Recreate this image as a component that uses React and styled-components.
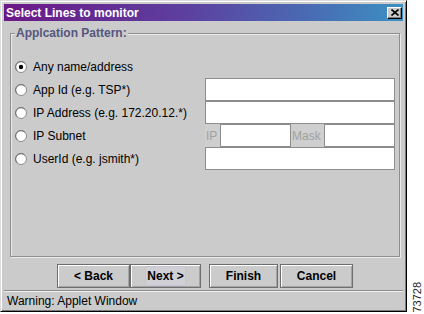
import React from 'react';
import styled, { createGlobalStyle } from 'styled-components';

const GlobalStyle = createGlobalStyle`
  html, body {
    margin: 0;
    background: #fff;
    font-family: "Liberation Sans", Arial, sans-serif;
    font-size: 12px;
  }
`;

const Page = styled.div`
  display: flex;
  align-items: flex-start;
  width: 424px;
  height: 314px;
  overflow: hidden;
`;

const Window = styled.div`
  width: 407px;
  height: 312px;
  box-sizing: border-box;
  display: flex;
  flex-direction: column;
  background: #cbcbcb;
  border: 1px solid;
  border-color: #dcdcdc #000 #000 #dcdcdc;
  box-shadow: inset 1px 1px 0 #fff, inset -1px -1px 0 #7c7c7c;
  padding: 3px 3px 1px 3px;
`;

const TitleBar = styled.div`
  height: 17px;
  flex-shrink: 0;
  display: flex;
  align-items: center;
  padding: 0 1px 0 2px;
  background: linear-gradient(to right, #6c1887 0%, #5d3f9f 45%, #4a69b3 75%, #3c90c2 100%);
  color: #fff;
  font-weight: bold;
  font-size: 12px;
`;

const Title = styled.span`
  flex: 1;
`;

const CloseButton = styled.div`
  width: 15px;
  height: 12px;
  box-sizing: border-box;
  display: flex;
  align-items: center;
  justify-content: center;
  background: #cbcbcb;
  border: 1px solid;
  border-color: #fff #000 #000 #fff;
  box-shadow: inset -1px -1px 0 #808080;
`;

const Group = styled.div`
  height: 224px;
  box-sizing: border-box;
  margin: 12px 3px 0 6px;
  display: flex;
  flex-direction: column;
  border: 1px solid #8e8e8e;
  box-shadow: 1px 1px 0 #ebebeb, inset 1px 1px 0 #ebebeb;
`;

const Legend = styled.span`
  align-self: flex-start;
  margin: -8px 0 0 4px;
  padding: 0 1px;
  line-height: 14px;
  background: #cbcbcb;
  color: #56567e;
  font-weight: bold;
`;

const Rows = styled.div`
  margin-top: 15px;
  padding-left: 4px;
  display: flex;
  flex-direction: column;
`;

const Row = styled.div`
  height: 23px;
  display: grid;
  grid-template-columns: 190px 190px;
  align-items: center;
`;

const Choice = styled.label`
  display: flex;
  align-items: center;
  gap: 6px;
  color: #000;
`;

const Field = styled.div`
  height: 23px;
  box-sizing: border-box;
  flex: ${(p) => p.$flex || 'none'};
  width: ${(p) => (p.$w ? `${p.$w}px` : 'auto')};
  background: #fff;
  border: 1px solid #8c8c8c;
`;

const Split = styled.div`
  display: flex;
  height: 23px;
`;

const Tag = styled.span`
  width: ${(p) => p.$w}px;
  box-sizing: border-box;
  display: flex;
  align-items: center;
  padding-left: 1px;
  background: #cfcfcf;
  color: #a0a0a0;
`;

const ButtonRow = styled.div`
  display: flex;
  margin-top: 7px;
  padding-left: 53px;
  flex-shrink: 0;
`;

const Button = styled.div`
  width: ${(p) => p.$w}px;
  margin-left: ${(p) => p.$ml || 0}px;
  height: 24px;
  box-sizing: border-box;
  display: flex;
  align-items: center;
  justify-content: center;
  border: 1px solid #6e6e6e;
  box-shadow: inset 1px 1px 0 #fff, inset -1px -1px 0 #a4a4a4;
  font-weight: bold;
  color: #000;
`;

const Focus = styled.span`
  padding: 2px 1px;
  border: 1px solid #c4c4d6;
  background: #d0d0d6;
`;

const StatusBar = styled.div`
  margin-top: 2px;
  flex: 1;
  display: flex;
  align-items: center;
  padding-left: 3px;
  border-top: 1px solid #8c8c8c;
  box-shadow: inset 0 1px 0 #f0f0f0;
  color: #000;
`;

const Side = styled.div`
  align-self: flex-end;
  margin: 0 0 1px 4px;
  writing-mode: vertical-rl;
  transform: rotate(180deg);
  font-size: 11px;
  color: #222;
`;

const Radio = ({ checked }) => (
  <svg width="12" height="12" viewBox="0 0 12 12">
    <circle cx="6" cy="6" r="5.5" fill="#fff" stroke="#8a8a8a" />
    <path d="M2.2 9.8A5 5 0 0 1 9.8 2.2" fill="none" stroke="#707070" />
    {checked && <circle cx="6" cy="6" r="2.2" fill="#000" />}
  </svg>
);

const options = [
  { label: 'Any name/address', checked: true },
  { label: 'App Id (e.g. TSP*)', field: 'text' },
  { label: 'IP Address (e.g. 172.20.12.*)', field: 'text' },
  { label: 'IP Subnet', field: 'subnet' },
  { label: 'UserId (e.g. jsmith*)', field: 'text' },
];

export default function App() {
  return (
    <Page>
      <GlobalStyle />
      <Window>
        <TitleBar>
          <Title>Select Lines to monitor</Title>
          <CloseButton>
            <svg width="8" height="7" viewBox="0 0 8 7">
              <path d="M0.5 0.5L7.5 6.5M7.5 0.5L0.5 6.5" stroke="#000" strokeWidth="1.6" />
            </svg>
          </CloseButton>
        </TitleBar>
        <Group>
          <Legend>Applcation Pattern:</Legend>
          <Rows>
            {options.map((o) => (
              <Row key={o.label}>
                <Choice>
                  <Radio checked={o.checked} />
                  {o.label}
                </Choice>
                {o.field === 'text' && <Field />}
                {o.field === 'subnet' && (
                  <Split>
                    <Tag $w={15}>IP</Tag>
                    <Field $w={71} />
                    <Tag $w={33}>Mask</Tag>
                    <Field $flex={1} />
                  </Split>
                )}
              </Row>
            ))}
          </Rows>
        </Group>
        <ButtonRow>
          <Button $w={73}>&lt; Back</Button>
          <Button $w={71}>
            <Focus>Next &gt;</Focus>
          </Button>
          <Button $w={69} $ml={8}>Finish</Button>
          <Button $w={73} $ml={2}>Cancel</Button>
        </ButtonRow>
        <StatusBar>Warning: Applet Window</StatusBar>
      </Window>
      <Side>73728</Side>
    </Page>
  );
}
